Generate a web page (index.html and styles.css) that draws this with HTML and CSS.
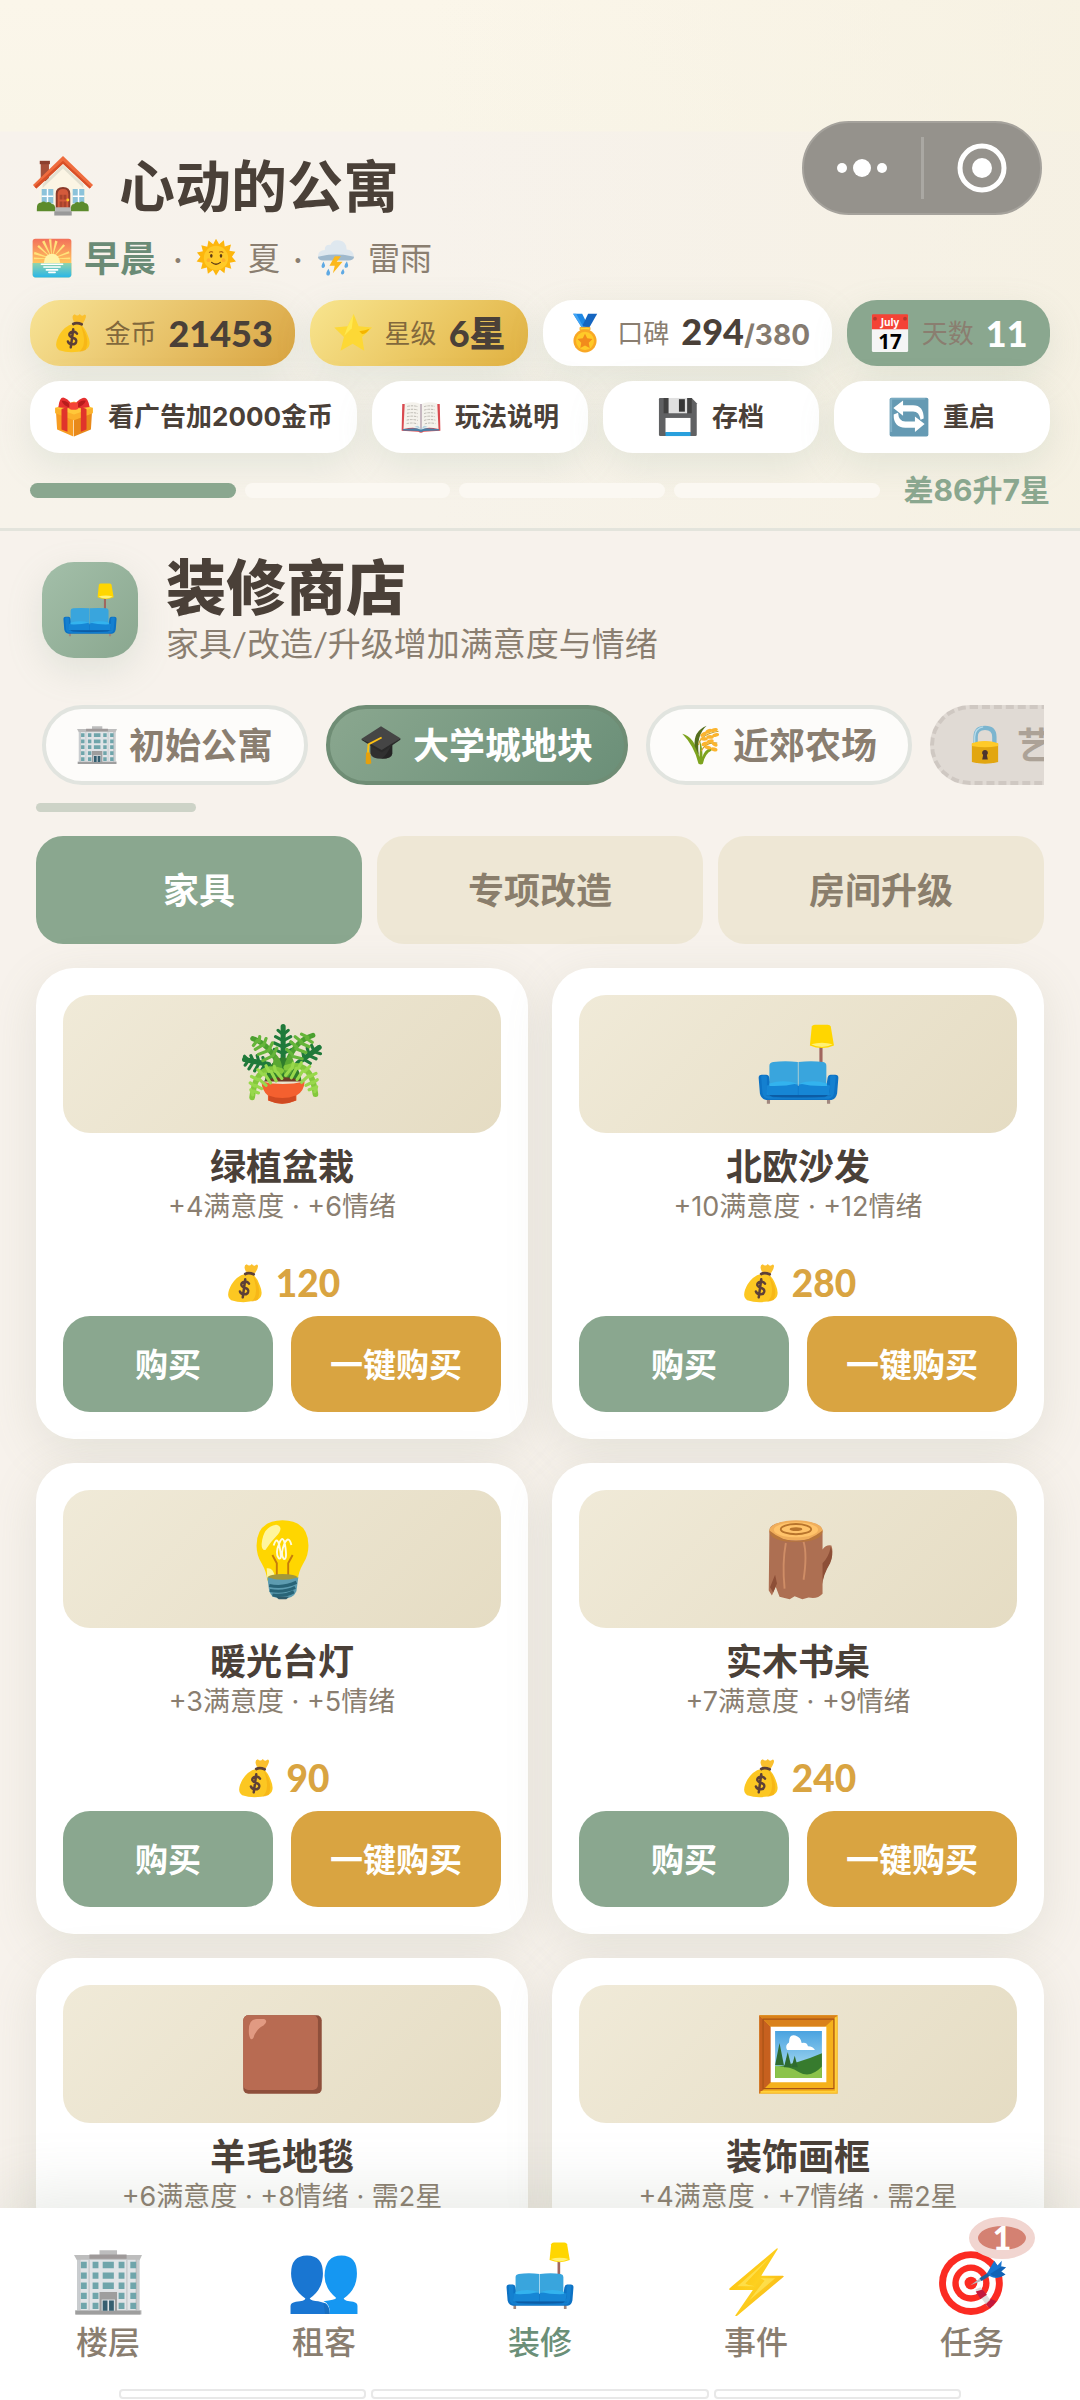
FILE: index.html
```html
<!DOCTYPE html>
<html lang="zh-CN">
<head>
    <meta charset="UTF-8">
    <meta name="viewport" content="width=device-width, initial-scale=1">
    <title>心动的公寓</title>
    <link rel="stylesheet" href="styles.css">
</head>
<body>
    <svg class="sprite" aria-hidden="true">
        <defs>
            <linearGradient id="g-dawn" x1="0" y1="0" x2="0" y2="1"><stop offset="0" stop-color="#f2705a"/><stop offset=".6" stop-color="#ffc25e"/><stop offset="1" stop-color="#ffe58c"/></linearGradient>
            <linearGradient id="g-sea" x1="0" y1="0" x2="0" y2="1"><stop offset="0" stop-color="#8fd3ac"/><stop offset="1" stop-color="#29b6e8"/></linearGradient>
            <linearGradient id="g-sky" x1="0" y1="0" x2="0" y2="1"><stop offset="0" stop-color="#4aa3e0"/><stop offset="1" stop-color="#b8e4f5"/></linearGradient>
            <linearGradient id="g-bolt" x1="0" y1="0" x2="1" y2="1"><stop offset="0" stop-color="#feb804"/><stop offset=".5" stop-color="#fdd01f"/><stop offset="1" stop-color="#f7a812"/></linearGradient>
        </defs>
        <symbol id="i-house" viewBox="0 0 128 128">
            <path fill="#a6503a" d="M18 14h17v40H18z"/><path fill="#8c3f2e" d="M16 12h21v7H16z"/>
            <path fill="#fbf5e4" d="M64 20 16 66v46h96V66z"/>
            <path fill="#e3e0d0" d="M64 20 22 60v8l42-40 42 40v-8z"/>
            <path fill="#ef6c3e" d="M64 2 2 62l7 7 55-51 55 51 7-7z"/><path fill="#d84f27" d="M2 62l7 7 55-51 55 51 3-3L64 12 5 65z"/>
            <path fill="#8cc3da" d="M20 70h24v30H20zM84 70h24v30H84z"/>
            <path stroke="#fff" stroke-width="3" d="M32 70v30M20 85h24M96 70v30M84 85h24"/>
            <path fill="#8b3b2a" d="M49 111V80q0-14 15-14t15 14v31z"/><path fill="#d45a3b" d="M53 111V81q0-11 11-11t11 11v30z"/>
            <path fill="#a8432c" d="M57 82h6v10h-6zM65 82h6v10h-6zM57 96h6v12h-6zM65 96h6v12h-6z"/><circle cx="74" cy="93" r="3" fill="#ffca28"/>
            <path fill="#5c8b2c" d="M10 112q-1-14 9-14 5-4 10 0 8-3 12 3 7 0 7 11v4H10zM80 112q0-11 7-11 4-6 11-3 6-4 11 1 9 1 8 13v4H80z"/>
            <path fill="#b8b8b8" d="M48 108h32v8H48z"/><path fill="#999" d="M46 116h36v9H46z"/>
        </symbol>
        <symbol id="i-sunrise" viewBox="0 0 128 128">
            <rect x="2" y="2" width="124" height="124" rx="9" fill="url(#g-dawn)"/>
            <path fill="#ffe27a" d="M64 66 54 4h8zM64 66 74 8l8 3zM64 66l36-46 6 5zM64 66l54-24 2 7zM64 66 40 8l-8 4zM64 66 22 22l-5 6zM64 66 8 44l-2 8zM64 66 6 62v6zM64 66l58-4v6z"/>
            <path fill="url(#g-sea)" d="M2 80h124v37q0 9-9 9H11q-9 0-9-9z"/>
            <path fill="#fff2a8" d="M38 80a26 30 0 0 1 52 0z"/>
            <path stroke="#fff" stroke-width="5" stroke-linecap="round" d="M30 84h68M38 93h52M46 102h36M54 110h20"/>
        </symbol>
        <symbol id="i-sun" viewBox="0 0 128 128">
            <path fill="#fdb60d" d="m64 2 10 18 15-13 3 20 20-6-5 20 19 3-11 16 13 15-20 4 5 19-19-5-3 20-15-12-12 19-10-18-16 12-3-20-19 5 5-20-19-4 12-15L3 46l19-4-5-19 19 5 4-20 15 12z"/>
            <circle cx="64" cy="64" r="39" fill="#ffca28"/>
            <ellipse cx="49" cy="57" rx="4" ry="6" fill="#5d3b16"/><ellipse cx="80" cy="57" rx="4" ry="6" fill="#5d3b16"/>
            <path fill="none" stroke="#b06a12" stroke-width="4" stroke-linecap="round" d="M43 46q5-4 10-1M76 45q6-3 10 1"/>
            <path fill="none" stroke="#5d3b16" stroke-width="4" stroke-linecap="round" d="M50 78q14 12 28 0"/>
            <circle cx="40" cy="71" r="6" fill="#ff9d2e" opacity=".6"/><circle cx="88" cy="71" r="6" fill="#ff9d2e" opacity=".6"/>
        </symbol>
        <symbol id="i-storm" viewBox="0 0 128 128">
            <path fill="#dfe8ef" d="M8 65Q2 40 28 38 28 20 46 22 54 3 76 8q22 4 22 29 24 2 23 25z"/>
            <path fill="#9fb9cd" d="M6 60q58-14 116 0-2 12-18 12H22Q8 72 6 60z"/>
            <path fill="#fcb81b" d="m60 58-17 31h17l-6 24 31-37H66l14-18z"/>
            <path fill="#5fa9e3" d="M24 75q-10 16-4 20 9 3 9-8zM40 98q-11 15-5 21 10 4 10-9zM99 74q-12 16-6 21 10 2 10-8zM87 98q-11 13-5 18 8 3 9-7z"/>
        </symbol>
        <symbol id="i-bag" viewBox="0 0 128 128">
            <path fill="#fbc02d" d="M70 28Q60 8 73 4q8 9 16-1 6 10 16 2 10 2-6 28z"/>
            <path fill="#fcc722" d="M67 35q-26 6-43 34-21 38-1 50 40 13 84-1 22-13 8-45-8-25-24-38z"/>
            <path fill="#f2a90f" d="M91 37q33 46 16 81-9 5-20 6 29-22 4-87z" opacity=".55"/>
            <path fill="none" stroke="#5d4037" stroke-width="9" stroke-linecap="round" d="M68 35q11-6 27 1"/>
            <path fill="none" stroke="#5d4037" stroke-width="8" stroke-linecap="round" d="M80 66q-5-8-15-6-12 3-9 12 2 5 12 8 12 3 9 13-3 9-14 7-9-1-12-9M68 52l-8 58"/>
        </symbol>
        <symbol id="i-star" viewBox="0 0 128 128">
            <path fill="#fdd835" d="m66 3 16 39 43 4-32 31 7 44-37-23-39 23 11-44L4 46l43-4z"/>
            <path fill="#ffee58" d="m66 3-6 46-24 24L47 42z" opacity=".8"/><path fill="#f4b400" d="M84 58q20-2 33-8-10 17-24 17z"/>
        </symbol>
        <symbol id="i-medal" viewBox="0 0 128 128">
            <path fill="#1e88e5" d="M26 2h29l20 40-19 8z"/><path fill="#1565c0" d="M74 2h29L77 48 56 40z"/><path fill="#42a5f5" d="M26 2h10l24 46-7-3z"/>
            <path fill="#fdd835" stroke="#f9a825" stroke-width="3" d="M48 46h32v8H48z"/>
            <circle cx="64" cy="89" r="37" fill="#f9a825"/><circle cx="64" cy="89" r="29" fill="#ffca28"/>
            <path fill="#f28b1c" d="m64 66 7 15 17 2-12 12 3 17-15-8-15 8 3-17-12-12 17-2z"/>
        </symbol>
        <symbol id="i-gift" viewBox="0 0 128 128">
            <path fill="#f79c22" d="M6 42 62 64v62L10 104z"/><path fill="#e8891a" d="m122 42-58 22v62l54-22z"/>
            <path fill="#ffc83a" d="m4 34 60-20 60 20v16L64 72 4 50z"/><path fill="#fbb12b" d="m64 56 60-22v18L64 74 4 52V34z"/>
            <path fill="#e0342b" d="m24 38 19-7v80l-19-7zM86 31l18 7v66l-18 7z"/>
            <path fill="#e53030" d="M60 36Q44 36 14 33 18-4 34 3q20 8 26 33zM64 36q6-26 28-33 16-6 22 29-30 5-50 4z"/>
            <path fill="#b81c1c" d="M54 34Q30 30 24 12q24-2 30 22zM70 34q26-4 32-22-24-4-32 22z"/><path fill="#f44336" d="M49 20q14-6 28 0v18q-14 6-28 0z"/>
        </symbol>
        <symbol id="i-book" viewBox="0 0 128 128">
            <path fill="#d94a50" d="M4 22h120l2 86-54 3q-8 6-16 0l-54-3z"/><path fill="#4a7fa7" d="m6 102 52-3q6 4 12 0l52 3v5l-50 2q-8 6-16 0L6 107z"/>
            <path fill="#f4f2ec" d="M12 20q34-8 50 2v82q-16-10-54-2zM66 22q16-10 50-2l4 82q-38-8-54 2z"/>
            <path fill="#b4d3e0" d="M62 22h4v82h-4zM52 92q6 0 10 10-10-6-20-6zM76 92q-6 0-10 10 10-6 20-6z"/>
            <path fill="none" stroke="#b7b4ad" stroke-width="3" stroke-dasharray="8 3" d="M20 30q20-4 34 1M20 41q20-4 34 1M19 52q20-4 35 1M19 63q20-4 35 1M18 74q20-4 36 1M18 85q20-4 34 1M74 31q14-5 34-1M74 42q14-5 34-1M74 53q14-5 35-1M74 64q14-5 35-1M74 75q14-5 36-1M76 86q14-5 34-1"/>
        </symbol>
        <symbol id="i-floppy" viewBox="0 0 128 128">
            <path fill="#606163" d="M6 3h102l16 17v101q0 4-4 4H7q-4 0-4-4V7q0-4 3-4z"/><path fill="#424242" d="M18 3h16v49H18zM94 3h14v49H94z"/>
            <path fill="#e0e0e0" d="M34 3h59v49H34z"/><path fill="#363636" d="M67 7h19v40H67z"/><path fill="#fff" d="M24 67h80v46H24z"/><path fill="#29a0dd" d="M24 112h80v13H24z"/>
        </symbol>
        <symbol id="i-refresh" viewBox="0 0 128 128">
            <rect x="2" y="2" width="124" height="124" rx="6" fill="#659ab3"/><path fill="#80b0c6" d="M4 4h112v4H10v104H4z"/>
            <path fill="#fff" d="m14 35 31-24v15h32q34 0 34 43l-10 4Q97 46 77 46H45v14z"/>
            <path fill="#fff" d="M114 86 83 112V98H52Q14 98 15 56l14-6q2 28 23 28h31V62z"/>
        </symbol>
        <symbol id="i-sofa" viewBox="0 0 128 128">
            <path fill="#a1665e" d="M97 36h5v32h-5z"/><path fill="#a1887f" d="M14 118h5v8h-5zM109 118h5v8h-5z"/>
            <path fill="#ffd600" d="M85 4q1-3 5-3h20q4 0 5 3l5 30q-19 8-38 0z"/><path fill="#fff176" d="M84 32q17-5 34 0-17 9-34 0z"/>
            <path fill="#0d72c4" d="M1 85q0-5 5-5h7q4 0 5 5l2 13h88l2-13q1-5 5-5h7q5 0 5 5l-2 25q-2 9-9 10H13q-8-1-10-10z"/>
            <path fill="#39a5dd" d="M18 66q0-5 6-6 19-2 39 0v37H18zM64 60q20-2 39 0 5 1 5 6v31H64z"/>
            <path fill="#1686d5" d="M14 97q24-8 49-1v16H14zM64 96q25-7 50 1l-2 15H64z"/><path fill="#33b3ee" d="M18 94q22-7 44 0-20 5-44 4zM65 94q22-7 44 0v4q-24 1-44-4z"/>
            <path fill="#0c5ca5" d="M13 112h102v2q-50 5-102 0z"/><path fill="#1c8ddb" d="M5 83q4-4 9 0v20q0 9 10 13h81q9-4 9-13V83q5-4 9 0l-3 27q-2 8-9 8H17q-9-1-10-9z" opacity=".55"/>
        </symbol>
        <symbol id="i-building" viewBox="0 0 128 128">
            <path fill="#bdbdbd" d="M48 4h33v10H48zM0 13h128l-5 11v93h4v8H2v-8h4V24z"/><path fill="#e0e4e7" d="M12 22h104v95H12z"/><path fill="#9e9999" d="M29 12h70v8H29z"/>
            <path fill="#c9cdd0" d="M6 22h5v96H6zM27 22h3v96h-3zM98 22h3v96h-3zM118 22h5v96h-5z"/>
            <path fill="#6fa5ab" d="M13 26h11v12H13zM13 46h11v12H13zM13 65h11v12H13zM13 84h11v12H13zM13 103h11v12H13zM35 26h11v12H35zM35 46h11v12H35zM35 65h11v12H35zM35 84h11v12H35zM35 103h11v12H35zM54 26h21v12H54zM54 46h21v12H54zM54 65h21v12H54zM84 26h11v12H84zM84 46h11v12H84zM84 65h11v12H84zM84 84h11v12H84zM84 103h11v12H84zM106 26h11v12h-11zM106 46h11v12h-11zM106 65h11v12h-11zM106 84h11v12h-11zM106 103h11v12h-11z"/>
            <path fill="#9e9e9e" d="M48 83h33v35H48zM3 118h122v7H3z"/><path fill="#dce3e6" d="M52 97h25v21H52z"/><path fill="#355f70" d="M54 99h9v19h-9zM66 99h9v19h-9z"/>
        </symbol>
        <symbol id="i-cap" viewBox="0 0 128 128">
            <path fill="#303030" d="M30 56h70v36q-2 16-34 16T30 90z"/><path fill="#1e1e1e" d="M100 56v36q-2 16-34 16 20-14 34-52z" opacity=".6"/>
            <path fill="#454545" d="M64 4 126 42 66 84 2 44z"/><path fill="#2a2a2a" d="m2 44 64 36 60-38v5L66 88 2 48z"/>
            <path fill="none" stroke="#fdc113" stroke-width="6" d="M66 40 24 62l-2 30"/><path fill="#e5a00d" d="M16 88h13l4 34q-10 6-18 1z"/>
        </symbol>
        <symbol id="i-rice" viewBox="0 0 128 128">
            <path fill="#7da31e" d="M56 124Q42 66 4 28q38 8 55 74 4-50-2-58 12 20 12 58 5-22 24-28 10-2 4 8-20 8-27 42-6 4-14 0z"/>
            <path fill="#546e1c" d="M44 68Q38 20 82 2 48 32 57 96z"/><path fill="none" stroke="#c8a02a" stroke-width="4" d="M56 64q6-34 64-44M64 84q16-32 52-26"/>
            <g fill="#fbb42e"><ellipse cx="72" cy="30" rx="11" ry="6" transform="rotate(-32 72 30)"/><ellipse cx="88" cy="20" rx="11" ry="6" transform="rotate(-28 88 20)"/><ellipse cx="106" cy="16" rx="12" ry="6" transform="rotate(-10 106 16)"/><ellipse cx="74" cy="44" rx="12" ry="6"/><ellipse cx="93" cy="38" rx="12" ry="6"/><ellipse cx="111" cy="32" rx="11" ry="6" transform="rotate(-12 111 32)"/><ellipse cx="76" cy="60" rx="11" ry="6" transform="rotate(-24 76 60)"/><ellipse cx="94" cy="52" rx="11" ry="6" transform="rotate(-8 94 52)"/><ellipse cx="108" cy="62" rx="10" ry="6" transform="rotate(28 108 62)"/><ellipse cx="86" cy="72" rx="11" ry="6" transform="rotate(12 86 72)"/><ellipse cx="106" cy="78" rx="11" ry="6" transform="rotate(15 106 78)"/></g>
        </symbol>
        <symbol id="i-lock" viewBox="0 0 128 128">
            <path fill="none" stroke="#7cb5cf" stroke-width="14" d="M34 64V38q0-29 30-29t30 29v26"/><path fill="none" stroke="#b7dceb" stroke-width="4" d="M31 62V38Q32 10 58 6"/>
            <path fill="#e2a610" d="M22 60q42-14 84 0v58q-42 12-84 0z"/><path fill="#ffca28" d="M22 58q42-14 84 0v9q-42 8-84 0z"/>
            <path fill="#4e342e" d="M64 80a9 9 0 0 1 6 16l3 14H55l3-14a9 9 0 0 1 6-16z"/>
        </symbol>
        <symbol id="i-plant" viewBox="0 0 128 128">
            <g fill="none" stroke-linecap="round">
                <path stroke="#1f7a3a" stroke-width="8" d="M65 4v58M4 56l38 8M122 37 88 62"/>
                <path stroke="#1f7a3a" stroke-width="5" d="m64 16-7-6M66 16l7-6M64 26l-11-6M66 26l11-6M64 36l-13-6M66 36l13-6M64 46l-13-6M66 46l13-6M10 57l-6-6M10 58l-5 7M18 59l-4-9M18 60l-7 11M27 61l-3-11M27 62l-7 12M36 63l-3-10M36 64l-6 11M114 43l-4-9M114 44l10 3M106 48l-3-10M106 50l11 5M98 54l-2-10M98 56l10 6"/>
                <path stroke="#4ba02f" stroke-width="8" d="M17 23q28 10 42 44M112 18Q84 26 71 62"/>
                <path stroke="#65b53a" stroke-width="5" d="m24 26-6 8M27 28l1-8M33 33l-12 7M34 34l4-11M42 42l-16 6M42 42l6-12M49 50l-16 8M49 50l6-12M104 21l-10-5M102 23l9 6M94 28 84 20M93 30l13 6M86 36l-9-8M85 39l16 6M79 48l-8-8M79 51l16 4"/>
            </g>
            <path fill="#2f7d2b" d="M36 90q4-30 28-38 26 8 30 38z"/><path fill="#5aa832" d="M62 88Q40 70 54 48q14 14 8 40zM68 88q-6-26 8-40 16 20-8 40z"/>
            <path fill="#6d3a27" d="M32 91q32-14 66 0z"/><path fill="#f4602f" d="M31 91q33 8 68 0-1 16-13 22v8q-22 10-45 0v-8Q31 105 31 91z"/><path fill="#cf4a22" d="M42 113q22 8 43 0v8q-22 10-43 0z"/>
            <g id="frond-low" fill="none" stroke-linecap="round"><path stroke="#84c83c" stroke-width="9" d="M62 74q-40-14-46 42"/><path stroke="#98d84c" stroke-width="5" d="m17 112-3-8M18 106l8 3M20 98l-7-5M21 97l10 5M25 88l-10-5M27 87l11 10M33 80l-8-8M36 79l9 14M43 75l-5-9M46 75l8 15M53 75l-2-8M55 76l8 10"/></g>
            <use href="#frond-low" transform="translate(132 -5) scale(-1 1)"/>
        </symbol>
        <symbol id="i-bulb" viewBox="0 0 128 128">
            <path fill="#ffd600" d="M64 2q41 1 41 40 0 16-8 28-8 14-9 27H40q-1-13-9-27-8-12-8-28Q23 3 64 2z"/>
            <path fill="#fff59d" d="M31 40Q33 12 54 9q12 3 3 15-12 12-20 25-6 1-6-9zM39 78q10-2 13 13l-12 3z"/>
            <path fill="none" stroke="#fffbe0" stroke-width="3" d="M50 42q5-16 9 0 5 24-1 20-6-8 1-24 6-14 9 3 4 24-2 22-6-7 1-24 7-14 11 2"/>
            <path fill="none" stroke="#c57b0b" stroke-width="3" d="M55 92V70l-7-13M73 92V70l7-13"/>
            <ellipse cx="64" cy="92" rx="23" ry="5" fill="#a3973a"/><path fill="#5d9cb0" d="M40 92q24 8 49 0l-3 22q-5 12-22 12t-21-12z"/>
            <path fill="none" stroke="#286477" stroke-width="5" d="M43 105q22 5 43-5M44 113q22 4 40-5M48 120q18 3 34-5"/><path fill="#2f5a68" d="M54 123h20l-4 4H58z"/>
        </symbol>
        <symbol id="i-log" viewBox="0 0 128 128">
            <path fill="#ad6f52" d="M18 18q0-14 42-14 40 0 42 14v30q6-8 14-6 4 12-2 26-12 20-12 34v16q-8 9-22 6l-10 3-12-5-8 5-16-4-6-16-6 14-5-8z"/>
            <path fill="#8d4f37" d="M102 70q10-10 13-26 5 12-1 26-12 20-12 34zM27 88l3 14-6 14-5-8z"/>
            <path fill="none" stroke="#cf8d66" stroke-width="3" d="M44 38q-6 32-2 72M72 36q6 20 0 60"/>
            <ellipse cx="60" cy="18" rx="42" ry="16" fill="#f0ae5b"/><path fill="#b8763c" d="M18 18q42 34 84 0 0 18-42 18T18 18z"/><ellipse cx="60" cy="17" rx="35" ry="12" fill="#ffc36a"/>
            <ellipse cx="60" cy="16" rx="24" ry="8" fill="none" stroke="#b8742c" stroke-width="3"/><ellipse cx="60" cy="16" rx="10" ry="3" fill="#b8742c"/>
        </symbol>
        <symbol id="i-rug" viewBox="0 0 128 128">
            <rect x="2" y="2" width="124" height="124" rx="8" fill="#8e4f3b"/><rect x="2" y="2" width="118" height="118" rx="8" fill="#b86b52"/>
            <path fill="#e19a82" d="M11 32q-2-24 12-24h12q7 3-1 10-12 6-16 20-5 6-7-6z"/>
        </symbol>
        <symbol id="i-frame" viewBox="0 0 128 128">
            <path fill="#f5b11b" d="M2 2h124v124H2z"/><path fill="#c6601f" d="m2 2 19 19v86L2 126z"/><path fill="#d9811b" d="M2 2h124l-20 18H21z"/>
            <path fill="none" stroke="#a95316" stroke-width="2" d="M8 8h112v110H8z"/><path fill="none" stroke="#ffcf3d" stroke-width="3" d="M4 123h119V5"/>
            <path fill="#fff" d="M20 20h88v88H20z"/><path fill="url(#g-sky)" d="M27 27h74v74H27z"/>
            <path fill="#fff" d="M46 57q-4-8 3-12 0-14 10-11 9 3 10 12 8-2 10 5 8 0 11 6z"/>
            <path fill="#377b2e" d="M27 84q37-6 74-22v39H27z"/><path fill="#8bc34a" d="M27 82q24 0 38 10 18 10 36-9v18H27z"/><path fill="#2e6b30" d="m34 46 7 35H27zM47 60l6 24H41zM58 66l5 18H53z"/>
        </symbol>
        <symbol id="i-people" viewBox="0 0 128 128">
            <path fill="#1976d2" d="M1 124v-15q0-6 10-8 17-1 18-6Q2 76 2 48q0-34 30-34t30 34q0 30-25 47 4 5 16 5l14 4q7 4 8 20z"/>
            <path fill="#1597f2" d="M65 52q1-38 32-38 29 0 29 34 0 30-25 47 2 5 18 6 8 2 8 8v15H75q0-20-12-24 22-2 24-6-22-18-22-42z"/><path fill="#1565a8" d="M63 104q11 3 12 20h-9z" opacity=".4"/>
        </symbol>
        <symbol id="i-bolt" viewBox="0 0 128 128">
            <path fill="url(#g-bolt)" d="M103 1 14 76q-2 3 2 3h42l-33 48q0 3 3 1l87-73q3-3-1-3H74l31-50q0-2-2-1z"/><path fill="#fff176" d="M91 17 29 72h33q-14-2-18-5zM72 57h28L51 99l29-38z" opacity=".5"/>
        </symbol>
        <symbol id="i-target" viewBox="0 0 128 128">
            <circle cx="62" cy="66" r="60" fill="#fb2b22"/><circle cx="62" cy="66" r="47" fill="#fff"/><circle cx="62" cy="66" r="35" fill="#fb2b22"/><circle cx="62" cy="66" r="23" fill="#fff"/><circle cx="62" cy="66" r="12" fill="#fb2b22"/>
            <path fill="#d8d4d4" d="m70 78 10-4 22 28-9 8z" opacity=".8"/><path fill="#c2183c" d="m71 82 13-4 8 10-12 8zM90 106l10-10 10 4-12 14z"/>
            <path fill="#b0bec5" d="m61 70 21-15 4 5z"/><path fill="#1f5f9d" d="m78 57 18-12 4 6-18 11z"/><path fill="#1976d2" d="m92 48 14-24 6 9 8-9-1 11 9 1-9 8 8 6q-16 11-29 3z"/><path fill="#0d57a5" d="m98 49 22-14 8 1-9 8 8 6q-16 11-29-1z" opacity=".6"/>
        </symbol>
    </svg>

    <div class="app">
        <header class="top">
            <div class="capsule">
                <button type="button" aria-label="更多"><svg viewBox="0 0 60 60"><circle cx="10" cy="30" r="5"/><circle cx="30" cy="30" r="9"/><circle cx="50" cy="30" r="5"/></svg></button>
                <button type="button" aria-label="关闭"><svg viewBox="0 0 60 60"><circle class="ring" cx="30" cy="30" r="22"/><circle cx="30" cy="30" r="10"/></svg></button>
            </div>
            <h1 class="title"><svg class="icon icon-title"><use href="#i-house"/></svg>心动的公寓</h1>
            <div class="weather">
                <svg class="icon"><use href="#i-sunrise"/></svg><strong>早晨</strong>
                <span class="dot">·</span><svg class="icon"><use href="#i-sun"/></svg><span>夏</span>
                <span class="dot">·</span><svg class="icon"><use href="#i-storm"/></svg><span>雷雨</span>
            </div>
            <div class="stats">
                <div class="stat gold"><svg class="icon"><use href="#i-bag"/></svg><span class="stat-label">金币</span><b>21453</b></div>
                <div class="stat star"><svg class="icon"><use href="#i-star"/></svg><span class="stat-label">星级</span><b>6星</b></div>
                <div class="stat"><svg class="icon"><use href="#i-medal"/></svg><span class="stat-label">口碑</span><b>294<small>/380</small></b></div>
                <div class="stat day">
                    <svg class="icon" viewBox="0 0 128 128">
                        <path fill="#f5f5f5" d="M6 8h116v112q0 5-5 5H11q-5 0-5-5z"/><path fill="#f44336" d="M6 8q0-4 4-4h108q4 0 4 4v44H6z"/>
                        <circle cx="16" cy="18" r="6" fill="#b7382c"/><circle cx="112" cy="18" r="6" fill="#b7382c"/>
                        <text class="cal-month" x="64" y="40">July</text><text class="cal-day" x="64" y="114">17</text>
                    </svg>
                    <span class="stat-label">天数</span><b>11</b>
                </div>
            </div>
            <div class="actions">
                <button type="button" class="wide"><svg class="icon"><use href="#i-gift"/></svg>看广告加2000金币</button>
                <button type="button"><svg class="icon"><use href="#i-book"/></svg>玩法说明</button>
                <button type="button"><svg class="icon"><use href="#i-floppy"/></svg>存档</button>
                <button type="button"><svg class="icon"><use href="#i-refresh"/></svg>重启</button>
            </div>
            <div class="progress">
                <i class="done"></i><i></i><i></i><i></i>
                <span>差86升7星</span>
            </div>
        </header>

        <main class="shop">
            <div class="shop-head">
                <div class="shop-icon"><svg class="icon"><use href="#i-sofa"/></svg></div>
                <div>
                    <h2>装修商店</h2>
                    <p>家具/改造/升级增加满意度与情绪</p>
                </div>
            </div>
            <div class="chips">
                <button type="button" class="chip"><svg class="icon"><use href="#i-building"/></svg>初始公寓</button>
                <button type="button" class="chip active"><svg class="icon"><use href="#i-cap"/></svg>大学城地块</button>
                <button type="button" class="chip"><svg class="icon"><use href="#i-rice"/></svg>近郊农场</button>
                <button type="button" class="chip locked"><svg class="icon"><use href="#i-lock"/></svg><span>艺</span></button>
            </div>
            <div class="scrollbar"></div>
            <div class="tabs">
                <button type="button" class="active">家具</button>
                <button type="button">专项改造</button>
                <button type="button">房间升级</button>
            </div>
            <div class="grid">
                <article class="card">
                    <div class="thumb"><svg class="icon"><use href="#i-plant"/></svg></div>
                    <h3>绿植盆栽</h3>
                    <p class="desc">+4满意度 · +6情绪</p>
                    <p class="price"><svg class="icon"><use href="#i-bag"/></svg>120</p>
                    <div class="buy"><button type="button">购买</button><button type="button" class="all">一键购买</button></div>
                </article>
                <article class="card">
                    <div class="thumb"><svg class="icon"><use href="#i-sofa"/></svg></div>
                    <h3>北欧沙发</h3>
                    <p class="desc">+10满意度 · +12情绪</p>
                    <p class="price"><svg class="icon"><use href="#i-bag"/></svg>280</p>
                    <div class="buy"><button type="button">购买</button><button type="button" class="all">一键购买</button></div>
                </article>
                <article class="card">
                    <div class="thumb"><svg class="icon"><use href="#i-bulb"/></svg></div>
                    <h3>暖光台灯</h3>
                    <p class="desc">+3满意度 · +5情绪</p>
                    <p class="price"><svg class="icon"><use href="#i-bag"/></svg>90</p>
                    <div class="buy"><button type="button">购买</button><button type="button" class="all">一键购买</button></div>
                </article>
                <article class="card">
                    <div class="thumb"><svg class="icon"><use href="#i-log"/></svg></div>
                    <h3>实木书桌</h3>
                    <p class="desc">+7满意度 · +9情绪</p>
                    <p class="price"><svg class="icon"><use href="#i-bag"/></svg>240</p>
                    <div class="buy"><button type="button">购买</button><button type="button" class="all">一键购买</button></div>
                </article>
                <article class="card">
                    <div class="thumb"><svg class="icon"><use href="#i-rug"/></svg></div>
                    <h3>羊毛地毯</h3>
                    <p class="desc">+6满意度 · +8情绪 · 需2星</p>
                </article>
                <article class="card">
                    <div class="thumb"><svg class="icon"><use href="#i-frame"/></svg></div>
                    <h3>装饰画框</h3>
                    <p class="desc">+4满意度 · +7情绪 · 需2星</p>
                </article>
            </div>
        </main>

        <footer class="bottom">
            <nav class="nav">
                <a href="#"><svg class="icon"><use href="#i-building"/></svg>楼层</a>
                <a href="#"><svg class="icon"><use href="#i-people"/></svg>租客</a>
                <a href="#" class="active"><svg class="icon"><use href="#i-sofa"/></svg>装修</a>
                <a href="#"><svg class="icon"><use href="#i-bolt"/></svg>事件</a>
                <a href="#"><svg class="icon"><use href="#i-target"/></svg>任务<span class="badge">1</span></a>
            </nav>
            <div class="handles"><i></i><i class="mid"></i><i></i></div>
        </footer>
    </div>
</body>
</html>
```
FILE: styles.css
```css
* { box-sizing: border-box; }
body { margin: 0; background: #f7f2ec; color: #4a4038; font-family: Lato, "Noto Sans CJK SC", sans-serif; }
h1, h2, h3, p { margin: 0; }
button { border: none; margin: 0; padding: 0; font-family: inherit; line-height: 40px; cursor: pointer; }
.sprite { position: absolute; width: 0; height: 0; }
.icon { width: 40px; height: 40px; flex: none; display: block; }
.cal-month { font: bold 32px "Open Sans", sans-serif; fill: #fff; text-anchor: middle; }
.cal-day { font: bold 66px "Open Sans", sans-serif; fill: #000; text-anchor: middle; }

.app { display: flex; flex-direction: column; height: 100vh; overflow: hidden; }

/* header */
.top { position: relative; flex: none; padding: 150px 30px 20px; border-bottom: 3px solid #e3e4dc; background: linear-gradient(90deg, rgba(247, 242, 236, 0) 40%, rgba(245, 240, 224, .7)), linear-gradient(#fbf6ea 0, #f9f5e8 131px, #f7f2ec 132px, #f7f3ea 100%); }
.capsule { position: absolute; top: 121px; right: 38px; width: 240px; height: 94px; display: flex; align-items: center; border: 2px solid #a5a29c; border-radius: 47px; background: #95928c; }
.capsule button { flex: 1; height: 62px; display: flex; align-items: center; justify-content: center; background: none; }
.capsule button + button { border-left: 3px solid #aaa8a3; }
.capsule svg { width: 60px; height: 60px; fill: #fff; }
.capsule .ring { fill: none; stroke: #fff; stroke-width: 5; }
.title { display: flex; align-items: center; gap: 25px; font-size: 56px; line-height: 72px; font-weight: 700; }
.icon-title { width: 62px; height: 62px; margin-left: 2px; }
.weather { display: flex; align-items: center; gap: 12px; margin-top: 14px; height: 44px; padding-left: 2px; font-size: 32px; line-height: 44px; color: #8a7e70; }
.weather strong { margin-right: 4px; font-size: 36px; color: #6a8b76; }
.weather .dot { width: 12px; text-align: center; }
.stats, .actions { display: flex; gap: 15px; }
.stats { margin-top: 20px; }
.stat { flex: 1 1 auto; height: 66px; display: flex; align-items: center; justify-content: center; gap: 12px; border-radius: 30px; background: #fff; box-shadow: 0 12px 36px rgba(138, 167, 143, .18); white-space: nowrap; }
.stat b { font-size: 36px; font-weight: 900; line-height: 50px; color: #4a4038; }
.stat small { font-family: Inter, sans-serif; font-size: 28px; font-weight: 700; color: #857b70; }
.stat-label { font-size: 26px; line-height: 50px; color: #8a7e70; }
.gold { background: linear-gradient(135deg, #f8e496, #d9a441); }
.star { background: linear-gradient(135deg, #f8e58f, #e0b040); }
.gold .stat-label, .star .stat-label { color: #82683c; }
.day { background: #8aa78f; }
.day b { color: #fff; }
.actions { margin-top: 15px; }
.actions button { flex: 1; height: 72px; display: flex; align-items: center; justify-content: center; gap: 14px; border-radius: 30px; background: #fff; box-shadow: 0 12px 36px rgba(138, 167, 143, .18); color: #4a4038; font-family: Inter, "Noto Sans CJK SC", sans-serif; font-size: 26px; font-weight: 700; white-space: nowrap; }
.actions .wide { flex: none; padding: 0 24px; }
.progress { display: flex; align-items: center; gap: 9px; margin-top: 19px; }
.progress i { flex: 1; height: 15px; border-radius: 8px; background: #fbf8f2; }
.progress .done { background: #8aa78f; }
.progress span { margin-left: 15px; font-family: Inter, "Noto Sans CJK SC", sans-serif; font-size: 30px; line-height: 36px; font-weight: 700; color: #8aa78f; }

/* shop */
.shop { flex: 1; min-height: 0; overflow: hidden; padding: 26px 36px 0; }
.shop-head { display: flex; align-items: center; gap: 28px; padding-left: 6px; }
.shop-icon { width: 96px; height: 96px; display: flex; align-items: center; justify-content: center; border-radius: 32px; background: linear-gradient(135deg, #a3bfa9, #8aa78f); box-shadow: 0 12px 36px rgba(138, 167, 143, .2); }
.shop-icon .icon { width: 54px; height: 54px; }
.shop h2 { font-size: 60px; line-height: 60px; font-weight: 900; }
.shop-head p { margin-top: 6px; font-size: 33px; line-height: 40px; color: #8a7e70; }
.chips { display: flex; gap: 18px; margin-top: 42px; padding: 0 6px; overflow: hidden; }
.chip { flex: none; height: 80px; display: flex; align-items: center; gap: 12px; padding: 0 31px; border: 4px solid #e1e4df; border-radius: 40px; background: #fdfcfa; color: #8a7e70; font-size: 36px; font-weight: 700; }
.chip.active { border-color: #6f8d75; background: linear-gradient(135deg, #8aa78f, #6b8f78); color: #fff; }
.chip.locked { border: 4px dashed #cfc8c2; background: #e0dad4; }
.chip.locked span { opacity: .6; }
.scrollbar { width: 160px; height: 9px; margin-top: 18px; border-radius: 5px; background: #cdd3c7; }
.tabs { display: grid; grid-template-columns: repeat(3, 1fr); gap: 15px; margin-top: 24px; }
.tabs button { height: 108px; border-radius: 27px; background: #eee7d5; color: #8a7e6c; font-size: 36px; font-weight: 700; }
.tabs .active { background: #8aa78f; color: #fff; }
.grid { display: grid; grid-template-columns: 1fr 1fr; gap: 24px; margin-top: 24px; }
.card { padding: 27px; border-radius: 38px; background: #fff; box-shadow: 0 12px 48px rgba(138, 140, 120, .16); text-align: center; }
.thumb { height: 138px; display: flex; align-items: center; justify-content: center; border-radius: 27px; background: linear-gradient(135deg, #f0ead8, #e5dcc3); }
.thumb .icon { width: 81px; height: 81px; }
.card h3 { margin-top: 11px; font-size: 36px; line-height: 44px; font-weight: 700; }
.desc { font-family: Inter, "Noto Sans CJK SC", sans-serif; font-size: 27px; line-height: 38px; color: #8a7e70; }
.price { display: flex; align-items: center; justify-content: center; gap: 12px; margin-top: 35px; font-size: 37px; line-height: 44px; font-weight: 900; color: #d9a441; }
.buy { display: grid; grid-template-columns: 1fr 1fr; gap: 18px; margin-top: 11px; }
.buy button { height: 96px; border-radius: 27px; background: #8aa78f; color: #fff; font-size: 33px; font-weight: 700; }
.buy .all { background: #d9a441; }

/* bottom bar */
.bottom { position: relative; flex: none; padding-bottom: 1px; background: #fff; box-shadow: 0 -12px 60px rgba(138, 150, 130, .2); }
.nav { display: flex; padding-top: 40px; }
.nav a { position: relative; flex: 1; display: flex; flex-direction: column; align-items: center; gap: 6px; color: #8a7e70; font-size: 32px; line-height: 40px; font-weight: 500; text-decoration: none; }
.nav .icon { width: 68px; height: 68px; }
.nav .active { color: #6b8f78; }
.nav .active .icon { transform: translateY(-6px); }
.badge { position: absolute; top: -31px; left: 50%; margin-left: -3px; width: 66px; height: 42px; display: flex; align-items: center; justify-content: center; border: 9px solid #f1d5d0; border-radius: 50%; background: #d48172; color: #fff; font-size: 32px; line-height: 24px; font-weight: 900; }
.handles { display: flex; gap: 5px; margin: 27px 11% 0; }
.handles i { flex: 247; height: 10px; border: 2px solid #e8e8e8; border-radius: 4px; }
.handles .mid { flex: 339; }
```
